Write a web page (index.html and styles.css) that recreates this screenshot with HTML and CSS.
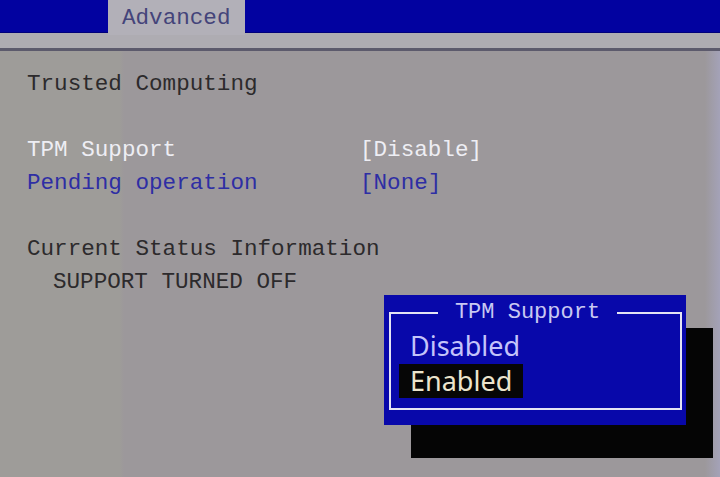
FILE: index.html
```html
<!DOCTYPE html>
<html>
<head>
<meta charset="utf-8">
<link rel="stylesheet" href="styles.css">
</head>
<body>
<div class="screen">
  <div class="topbar">
    <div class="bar-left"></div>
    <div class="tab">Advanced</div>
    <div class="bar-right"></div>
  </div>
  <div class="strip"></div>
  <div class="rule"></div>
  <div class="content">
    <div class="line dark">Trusted Computing</div>
    <div class="line"></div>
    <div class="line row white"><span class="label">TPM Support</span><span class="value">[Disable]</span></div>
    <div class="line row blue"><span class="label">Pending operation</span><span class="value">[None]</span></div>
    <div class="line"></div>
    <div class="line dark">Current Status Information</div>
    <div class="line dark indent">SUPPORT TURNED OFF</div>
  </div>
  <div class="popup">
    <div class="frame">
      <div class="title"><span>TPM Support</span></div>
      <div class="opt">Disabled</div>
      <div class="opt sel"><span>Enabled</span></div>
    </div>
  </div>
</div>
</body>
</html>
```
FILE: styles.css
```css
html, body {
  margin: 0;
  padding: 0;
}
body {
  width: 720px;
  height: 477px;
  overflow: hidden;
  background: #9d9a9b;
  font-family: "Liberation Mono", "DejaVu Sans Mono", monospace;
  font-size: 22.6px;
}
.screen {
  position: relative;
  width: 720px;
  height: 477px;
  background: linear-gradient(to right, #9e9c99 0, #9e9c99 120px, #9c989b 124px, #9c989b 705px, #a4a2b8 720px);
}
.topbar {
  display: flex;
  height: 33px;
}
.bar-left {
  width: 108px;
  background: #0202a0;
  border-bottom: 1px solid #00007a;
}
.bar-right {
  flex: 1;
  background: #0202a0;
  border-bottom: 1px solid #00007a;
}
.tab {
  width: 137px;
  height: 35px;
  background: #b2b0b8;
  color: #44447a;
  padding-left: 14px;
  box-sizing: border-box;
  line-height: 36px;
  position: relative;
  z-index: 1;
}
.strip {
  height: 15px;
  background: #aeacb2;
}
.rule {
  height: 3px;
  background: #5c5a6c;
}
.content {
  padding: 17px 0 0 27px;
}
.line {
  height: 33px;
  line-height: 33px;
  white-space: pre;
}
.row {
  display: flex;
}
.label {
  width: 333px;
}
.dark {
  color: #2c2a2c;
}
.white {
  color: #eeeef4;
}
.blue {
  color: #2e2ea4;
}
.indent {
  padding-left: 26px;
}
.popup {
  position: absolute;
  left: 384px;
  top: 295px;
  width: 302px;
  height: 130px;
  background: #0808aa;
  box-shadow: 27px 33px 0 #050505;
  padding: 17px 4px 0 5px;
  box-sizing: border-box;
}
.frame {
  height: 98px;
  border: 2px solid #e4e4f4;
  box-sizing: border-box;
  position: relative;
  padding-top: 14px;
  padding-left: 8px;
}
.title {
  position: absolute;
  left: 0;
  right: 0;
  top: -16px;
  display: flex;
  justify-content: center;
  padding-right: 16px;
}
.title span {
  background: #0808aa;
  color: #c8c8f2;
  padding: 0 17px;
  line-height: 30px;
  font-size: 22px;
}
.opt {
  font-family: "Noto Sans", "DejaVu Sans", sans-serif;
  font-size: 27px;
  height: 35px;
  line-height: 35px;
  color: #c4c4fa;
  padding-left: 11px;
}
.opt.sel {
  padding-left: 0;
}
.opt.sel span {
  display: inline-block;
  background: #060606;
  color: #ece4cc;
  width: 124px;
  height: 34px;
  line-height: 34px;
  padding-left: 11px;
  box-sizing: border-box;
}
```
